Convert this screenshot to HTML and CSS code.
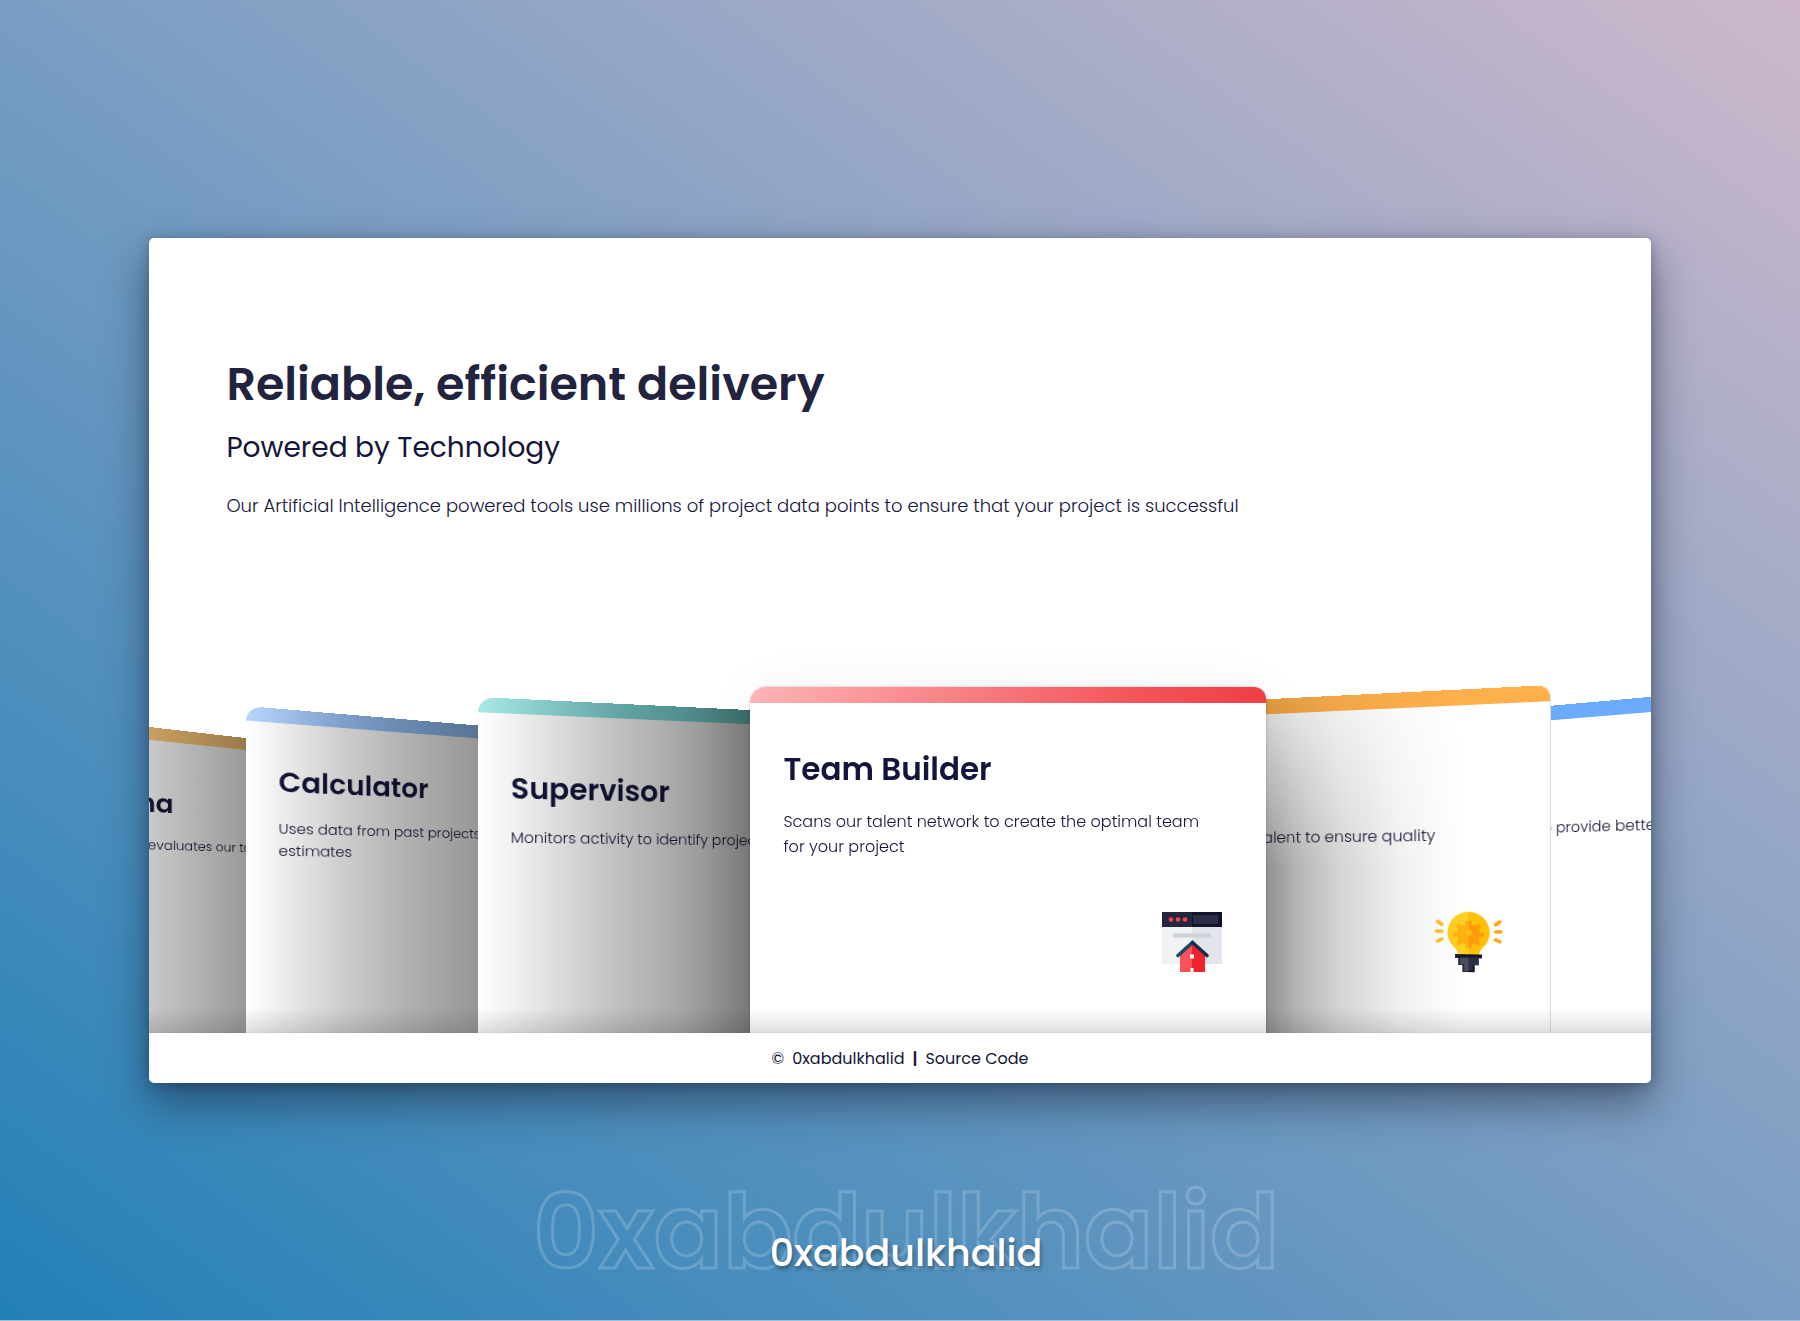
FILE: index.html
```
<!DOCTYPE html>
<html lang="en">
<head>
<meta charset="utf-8">
<meta name="viewport" content="width=device-width, initial-scale=1">
<title>Reliable, efficient delivery</title>
<link rel="stylesheet" href="styles.css">
</head>
<body>
<main class="panel">
  <header class="intro">
    <h1 class="intro-title">Reliable, efficient delivery</h1>
    <h2 class="intro-subtitle">Powered by Technology</h2>
    <p class="intro-text">Our Artificial Intelligence powered tools use millions of project data points to ensure that your project is successful</p>
  </header>

  <section class="stage" aria-label="Features">
    <div class="slide slide-karma-prev">
      <article class="card card-orange">
        <div class="card-body">
          <h3 class="card-title">Karma</h3>
          <p class="card-text">Regularly evaluates our talent to ensure quality</p>
        </div>
      </article>
    </div>
    <div class="slide slide-calculator">
      <article class="card card-blue">
        <div class="card-body">
          <h3 class="card-title">Calculator</h3>
          <p class="card-text">Uses data from past projects to provide better delivery estimates</p>
        </div>
      </article>
    </div>
    <div class="slide slide-supervisor">
      <article class="card card-cyan">
        <div class="card-body">
          <h3 class="card-title">Supervisor</h3>
          <p class="card-text">Monitors activity to identify project roadblocks</p>
        </div>
      </article>
    </div>
    <div class="slide slide-team">
      <article class="card card-red">
        <div class="card-body">
          <h3 class="card-title">Team Builder</h3>
          <p class="card-text">Scans our talent network to create the optimal team for your project</p>
        </div>
        <svg class="card-icon" viewBox="0 0 60 62" aria-hidden="true">
          <path fill="#f1f2f4" d="M0 15h30v37H0z"/>
          <path fill="#e2e4ec" d="M30 15h30v37H30z"/>
          <path fill="#24263f" d="M0 0h60v15H0z"/>
          <path fill="#11132b" d="M30 0h30v15H30z"/>
          <path fill="#2b2d46" d="M31 3h25v9H31z"/>
          <circle cx="9" cy="7.500" r="2.300" fill="#f4464c"/>
          <circle cx="16" cy="7.500" r="2.300" fill="#f4464c"/>
          <circle cx="23" cy="7.500" r="2.300" fill="#f4464c"/>
          <path fill="#cfd2da" d="M11 21.500h38v4H11z"/>
          <path fill="#fb5158" d="M30 32 18 42v18h10.500v-4H30z"/>
          <path fill="#f0222e" d="M30 32 43 42v18H31.500v-4H30z"/>
          <path fill="none" stroke="#1e4866" stroke-width="3.600" stroke-linecap="round" d="M16 43.500 30.500 30.500"/>
          <path fill="none" stroke="#162f4b" stroke-width="3.600" stroke-linecap="round" d="M30.500 30.500 45 43.500"/>
          <path fill="#fff" d="M28 42.500h4v4h-4z"/>
        </svg>
      </article>
    </div>
    <div class="slide slide-karma-next">
      <article class="card card-orange">
        <div class="card-body">
          <h3 class="card-title">Karma</h3>
          <p class="card-text">Regularly evaluates our talent to ensure quality</p>
        </div>
        <svg class="card-icon" viewBox="0 0 66 62" aria-hidden="true">
          <path fill="#ffd021" d="M33 0A21 21 0 0 0 20 37q3 3 3 7h10z"/>
          <path fill="#ffc107" d="M33 0A21 21 0 0 1 46 37q-3 3-3 7H33z"/>
          <path fill="#ffb013" d="M33 9h-3v4l-3 1-4-2-2 3 2 3-1 3h-4v4h4l1 3-2 4 3 2 3-2 3 1v4h3z"/>
          <path fill="#ff9a0c" d="M33 9h3v4l3 1 4-2 2 3-2 3 1 3h4v4h-4l-1 3 2 4-3 2-3-2-3 1v4h-3z"/>
          <circle cx="33" cy="21" r="3" fill="#ffc21c"/>
          <path fill="none" stroke="#ffc21c" stroke-width="3.500" stroke-linecap="round" d="m3 10 4 3M2 20h5M3 30l4-2"/>
          <path fill="none" stroke="#ffa414" stroke-width="3.500" stroke-linecap="round" d="m63 10-4 3M64 20h-5M63 30l-4-2"/>
          <path fill="#2a2f47" d="M20 43h26v4h-3v7h-4v7H27v-7h-4v-7h-3z"/>
          <path fill="#4b4e5c" d="M25 47h8v13h-4v-7h-4z"/>
          <path fill="#15182c" d="M20 43h26v3H20zM37 54h2v7h-6v-2h4z"/>
        </svg>
      </article>
    </div>
    <div class="slide slide-calculator-next">
      <article class="card card-blue">
        <div class="card-body">
          <h3 class="card-title">Calculator</h3>
          <p class="card-text">Uses data from past projects to provide better delivery estimates</p>
        </div>
      </article>
    </div>
  </section>

  <footer class="credits">
    <span>©</span>
    <a href="#author">0xabdulkhalid</a>
    <span class="credits-divider">|</span>
    <a href="#source">Source Code</a>
  </footer>
</main>

<div class="signature">
  <span class="signature-outline" aria-hidden="true">0xabdulkhalid</span>
  <span class="signature-name">0xabdulkhalid</span>
</div>
</body>
</html>
```
FILE: styles.css
```
* {
  box-sizing: border-box;
  margin: 0;
}

body {
  min-height: 100vh;
  display: flex;
  flex-direction: column;
  align-items: center;
  padding-top: 238px;
  overflow-x: hidden;
  border-bottom: 1px solid #a9bccb;
  background: linear-gradient(to top right, #2280b7, #799dc3 50%, #cdb8cb);
  color: #14153a;
  font-family: Poppins, Inter, "Open Sans", sans-serif;
}

.panel {
  width: 83.4%;
  overflow: hidden;
  border-radius: 5px;
  background: #fff;
  box-shadow: 0 20px 44px rgba(20, 25, 45, 0.5), 0 2px 12px rgba(20, 25, 45, 0.3);
}

.intro {
  padding: 116px 77px 0;
}

.intro-title {
  font-size: 46px;
  line-height: 60px;
  font-weight: 600;
  color: #22233f;
}

.intro-subtitle {
  margin-top: 14px;
  font-size: 28px;
  line-height: 40px;
  font-weight: 400;
}

.intro-text {
  margin-top: 24px;
  font-size: 18px;
  line-height: 28px;
  font-weight: 300;
}

/* Coverflow: each slide holds the strip left free by its neighbours */
.stage {
  position: relative;
  display: flex;
  height: 513px;
  padding-top: 167px;
  overflow: hidden;
}

.stage::after {
  content: "";
  position: absolute;
  z-index: 5;
  inset: auto 0 0;
  height: 24px;
  border-bottom: 1px solid rgba(0, 0, 0, 0.15);
  background: linear-gradient(transparent, rgba(0, 0, 0, 0.12));
}

.slide {
  position: relative;
  display: flex;
  height: 400px;
  min-width: 0;
}

.card {
  position: relative;
  flex: none;
  width: 516px;
  height: 400px;
  overflow: hidden;
  border-radius: 16px 12px 0 0;
  background: #fff;
  transform-origin: left center;
}

.card::before {
  content: "";
  display: block;
  height: 16px;
  background: var(--accent);
}

.card::after {
  content: "";
  position: absolute;
  inset: 0;
  background: var(--shade, none);
}

.card-orange { --accent: #ffb04c; }
.card-blue { --accent: #6babfb; }
.card-cyan { --accent: linear-gradient(to right, #a8e8e5, #7fdcda 30%, #76dadb); }
.card-red { --accent: linear-gradient(to right, #feb4b5, #f4545a 75%, #ef3e46); }

.card-body {
  display: flex;
  flex-direction: column;
  justify-content: center;
  height: 202px;
  padding: 0 44px 0 33px;
}

.card-title {
  font-size: 31px;
  line-height: 40px;
  font-weight: 600;
}

.card-text {
  margin-top: 20px;
  font-size: 16px;
  line-height: 25px;
  font-weight: 300;
}

.card-icon {
  position: absolute;
  top: 225px;
  right: 44px;
  height: 62px;
}

.slide-karma-prev { flex: 0 0 97px; z-index: 1; }
.slide-calculator { flex: 0 0 232px; z-index: 2; }
.slide-supervisor { flex: 0 0 272px; z-index: 3; }
.slide-team { flex: 0 0 516px; z-index: 4; }
.slide-karma-next { flex: 0 0 285px; z-index: 3; justify-content: flex-end; }
.slide-calculator-next { flex: 1 0 0; z-index: 2; justify-content: flex-end; }

.slide-karma-prev {
  perspective: 223px;
  perspective-origin: 125px center;
}

.slide-karma-prev .card {
  --accent: #ffca7c;
  --shade: linear-gradient(to right, rgba(0, 0, 0, 0), rgba(0, 0, 0, 0.2) 20%, rgba(0, 0, 0, 0.4) 45%);
  margin-left: -104px;
  transform: rotateY(10deg) scale(0.86);
}

.slide-calculator {
  perspective: 338px;
  perspective-origin: 234px center;
}

.slide-calculator .card {
  --accent: linear-gradient(to right, #b9d6fe, #9cc6fb 20%, #86bcfa);
  --shade: linear-gradient(to right, rgba(0, 0, 0, 0), rgba(0, 0, 0, 0.1) 10%, rgba(0, 0, 0, 0.2) 20%, rgba(0, 0, 0, 0.3) 33%, rgba(0, 0, 0, 0.42) 52%);
  transform: rotateY(10deg) scale(0.905);
}

.slide-supervisor {
  perspective: 652px;
  perspective-origin: 255px center;
}

.slide-supervisor .card {
  --shade: linear-gradient(to right, rgba(0, 0, 0, 0), rgba(0, 0, 0, 0.1) 12%, rgba(0, 0, 0, 0.23) 26%, rgba(0, 0, 0, 0.34) 41%, rgba(0, 0, 0, 0.52) 57%);
  transform: rotateY(10deg) scale(0.95);
}

.slide-team .card {
  width: 100%;
  box-shadow: 0 0 50px rgba(0, 0, 0, 0.05), 0 0 3px rgba(0, 0, 0, 0.25);
}

.slide-karma-next {
  perspective: 656px;
  perspective-origin: -34px center;
}

.slide-karma-next .card {
  --shade: linear-gradient(to right, rgba(0, 0, 0, 0.46) 43%, rgba(0, 0, 0, 0.3) 51%, rgba(0, 0, 0, 0.17) 60%, rgba(0, 0, 0, 0.06) 72%, rgba(0, 0, 0, 0) 84%);
  border-right: 1px solid #ddd;
  transform-origin: right center;
  transform: rotateY(-10deg) scale(1.01);
}

.slide-karma-next .card::after {
  mask-image: linear-gradient(rgba(0, 0, 0, 0.3), #000 45%);
}

.slide-calculator-next {
  perspective: 358px;
  perspective-origin: 16px center;
}

.slide-calculator-next .card {
  margin-right: -131px;
  transform-origin: right center;
  transform: rotateY(-10deg) scale(1.01);
}

.credits {
  display: flex;
  justify-content: center;
  gap: 8px;
  padding: 14px 0 12px;
  font-size: 16px;
  line-height: 24px;
}

.credits a {
  color: inherit;
  text-decoration: none;
}

.credits-divider {
  font-weight: 600;
}

.signature {
  display: grid;
  place-items: center;
  margin-top: 82px;
  padding-left: 12px;
}

.signature-outline,
.signature-name {
  grid-area: 1 / 1;
}

.signature-outline {
  font-size: 102px;
  line-height: 136px;
  font-weight: 600;
  color: transparent;
  -webkit-text-stroke: 3px rgba(255, 255, 255, 0.18);
}

.signature-name {
  padding-top: 40px;
  font-size: 38px;
  line-height: 48px;
  font-weight: 500;
  color: #fff;
  text-shadow: 1px 3px 4px rgba(0, 0, 0, 0.4);
}
```
